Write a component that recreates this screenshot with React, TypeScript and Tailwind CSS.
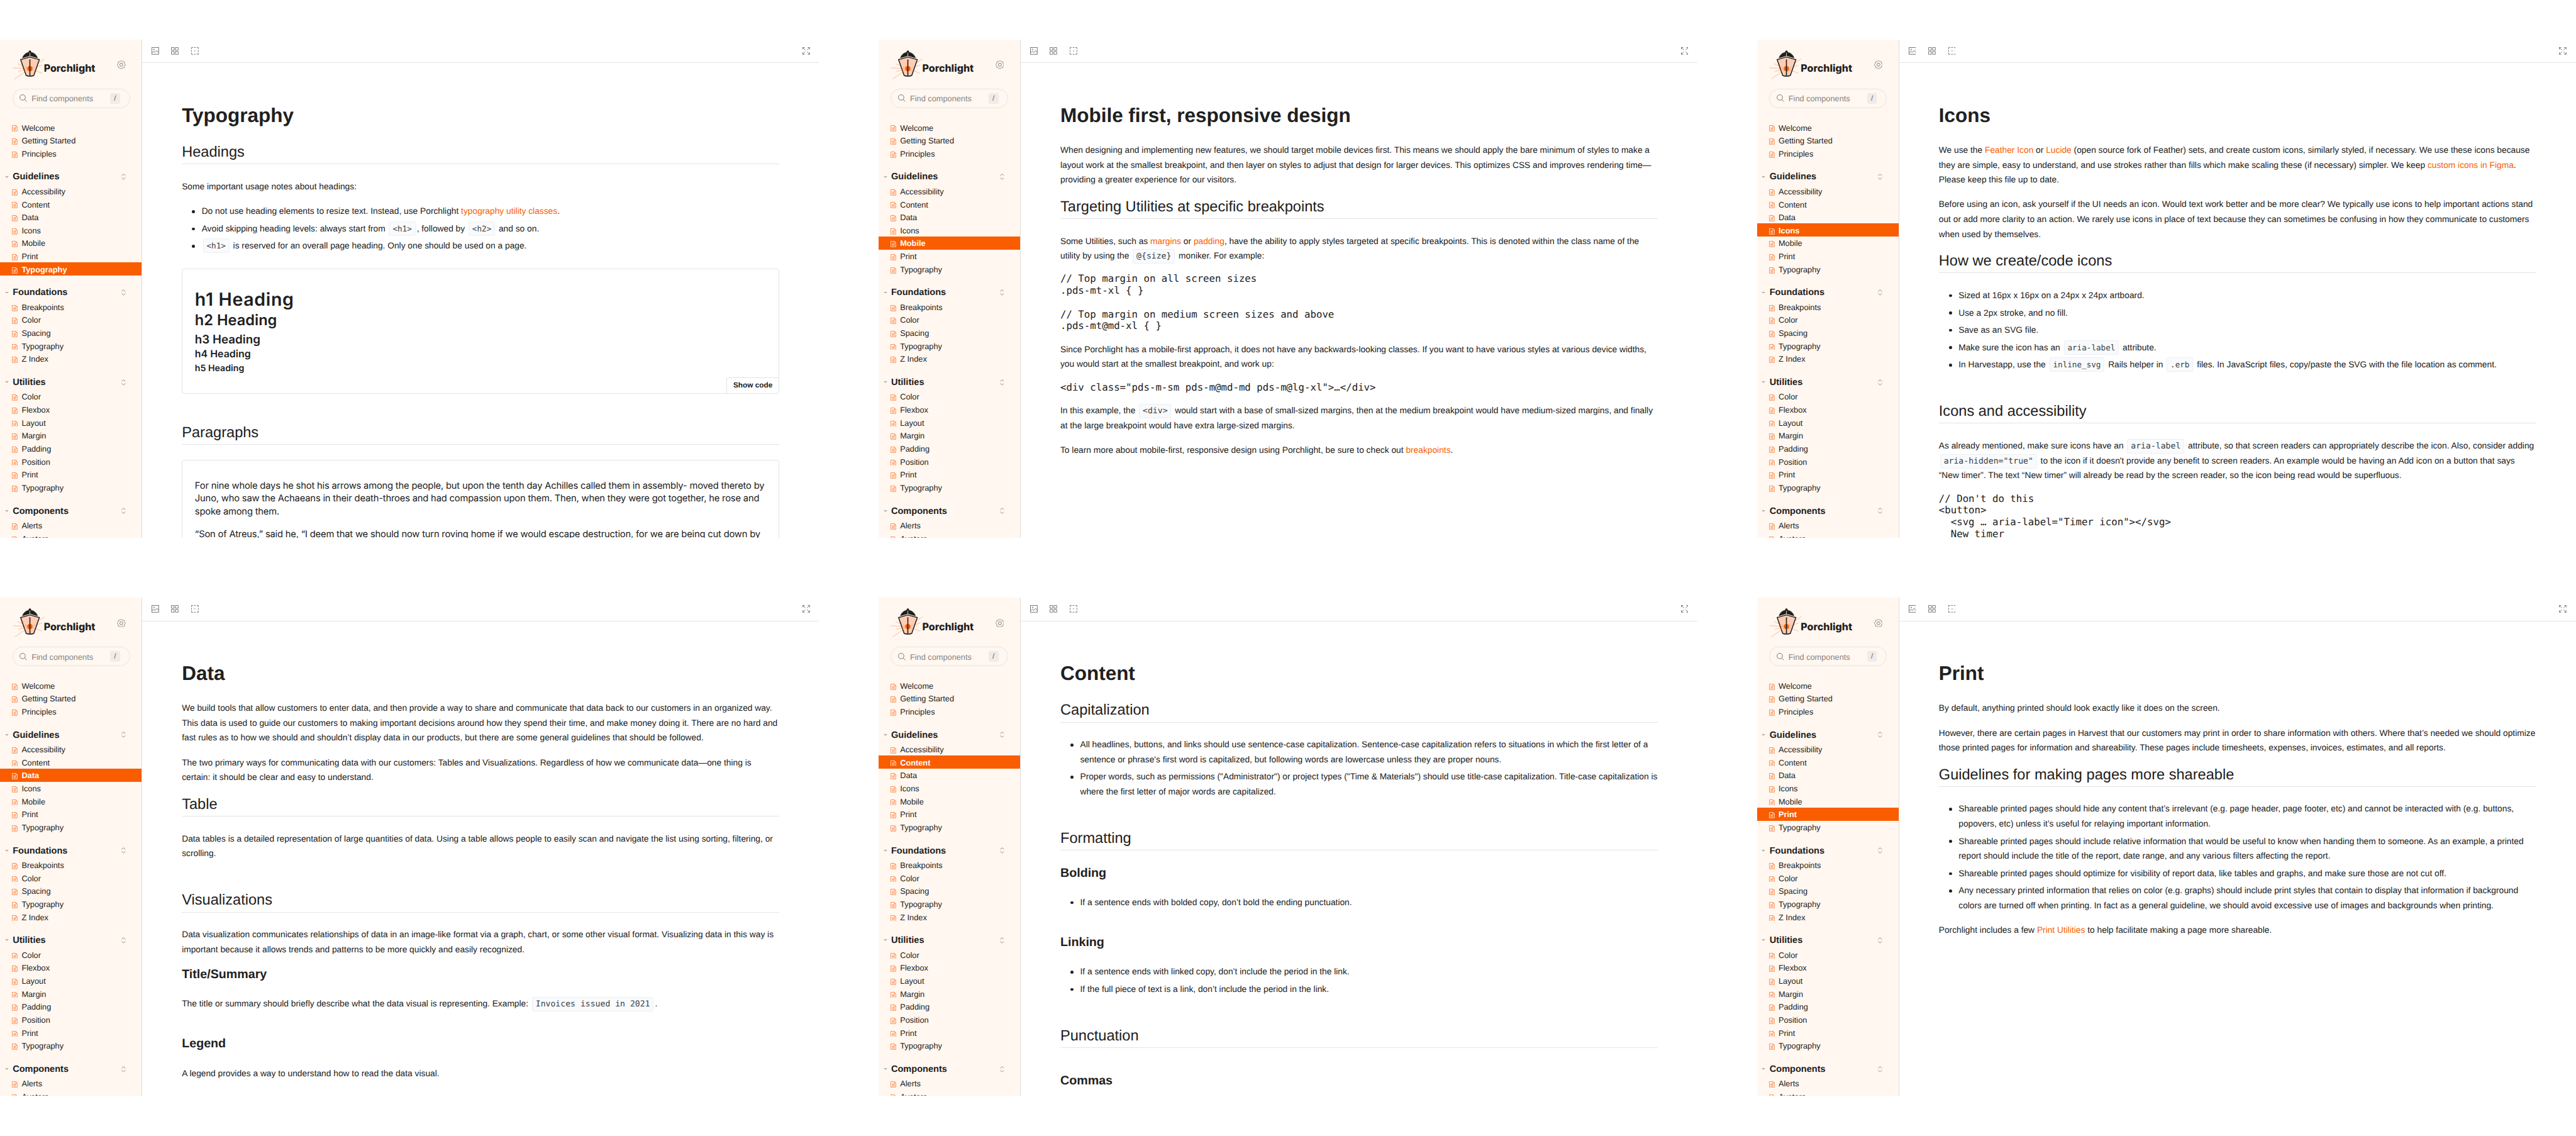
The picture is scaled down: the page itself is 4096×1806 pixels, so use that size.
import React from 'react';

const NAV: { title?: string; items: string[] }[] = [
  { items: ['Welcome', 'Getting Started', 'Principles'] },
  { title: 'Guidelines', items: ['Accessibility', 'Content', 'Data', 'Icons', 'Mobile', 'Print', 'Typography'] },
  { title: 'Foundations', items: ['Breakpoints', 'Color', 'Spacing', 'Typography', 'Z Index'] },
  { title: 'Utilities', items: ['Color', 'Flexbox', 'Layout', 'Margin', 'Padding', 'Position', 'Print', 'Typography'] },
  { title: 'Components', items: ['Alerts', 'Avatars'] },
];

const GEAR = Array.from({ length: 97 }, (_, i) => {
  const a = (i / 96) * Math.PI * 2;
  const r = 6 + 0.55 * Math.cos(8 * a);
  return `${i ? 'L' : 'M'}${(7 + r * Math.cos(a)).toFixed(2)} ${(7 + r * Math.sin(a)).toFixed(2)}`;
}).join('');

function Logo() {
  return (
    <svg viewBox="28 28 160 142" className="h-[47.3px] w-[53.3px] shrink-0" fill="none">
      <g stroke="#ffb18a" strokeWidth="2.6">
        <path d="M112 117L184 69M112 117L172 100M112 117L170 139M30 113L112 117M52 93L112 117M56 130L112 117M38 167L112 117" />
      </g>
      <path d="M67 73L112 60L158 73L131 150Q112 157 94 150Z" fill="#ffcdb4" stroke="#1f201d" strokeWidth="4.6" strokeLinejoin="round" />
      <path d="M88 108L112 117M86 128L112 117M85 115L112 117M137 110L112 117M135 125L112 117" stroke="#ffa473" strokeWidth="2.4" />
      <circle cx="112" cy="117" r="12.5" fill="#fa5d00" />
      <path d="M112 72V153" stroke="#1f201d" strokeWidth="5" />
      <circle cx="112" cy="35" r="6" fill="#1f201d" />
      <path d="M76 66C79 50 96 37 112 37C129 37 146 50 149 66L112 55Z" fill="#1f201d" stroke="#1f201d" strokeWidth="2" />
      <path d="M112 40V59M73 68L112 57L152 68" stroke="#fff7f0" strokeWidth="2.4" />
    </svg>
  );
}

function DocIcon({ active }: { active: boolean }) {
  return (
    <svg viewBox="0 0 9 10" className={`mt-[4px] h-[10px] w-[9px] shrink-0 ${active ? 'text-[#ffe3d2]' : 'text-[#ff8340]'}`} fill="none" stroke="currentColor" strokeWidth="0.9">
      <path d="M.5.5H6.4L8.5 2.6V9.5H.5Z" />
      <path d="M6.2.6V2.8H8.4" strokeWidth="0.8" />
      <path d="M2.3 4H6.7M2.3 5.7H6.7M2.3 7.4H6.7" strokeWidth="0.9" />
    </svg>
  );
}

function Sidebar({ active }: { active: string }) {
  return (
    <aside className="flex w-[230px] shrink-0 flex-col overflow-hidden border-r border-[#e0dddb] bg-[#fff7f0]">
      <div className="mt-[17px] flex h-12 shrink-0 items-center pr-[26px] pl-5">
        <Logo />
        <span className="mt-[12px] -ml-[2.5px] font-['Inter'] text-[16.3px] leading-5 font-extrabold text-[#1f201d]">Porchlight</span>
        <svg viewBox="0 0 14 14" className="ml-auto size-[14px]" fill="none" stroke="#7c7a77" strokeWidth="1">
          <path d={GEAR} />
          <circle cx="7" cy="7" r="2.5" />
        </svg>
      </div>
      <div className="mt-[14px] mr-[19px] ml-5 flex h-8 shrink-0 items-center rounded-full border border-[#e6e6e7] pr-[15px] pl-[11px]">
        <svg viewBox="0 0 12 12" className="size-[12px]" fill="none" stroke="#777672" strokeWidth="1">
          <circle cx="5" cy="5" r="4.4" />
          <path d="M8.3 8.3L11.6 11.6" />
        </svg>
        <span className="mt-px ml-[7px] text-[13px] text-[#84827f]">Find components</span>
        <span className="ml-auto flex h-[17px] w-4 items-center justify-center rounded-[3px] bg-[#f0ebe8] text-[12px] text-[#666]">/</span>
      </div>
      <nav className="mt-[20.3px] flex flex-col">
        {NAV.map((group, gi) => (
          <div key={gi}>
            {group.title && (
              <div className="flex h-10 items-center pt-[15px] pr-[26px] pl-[8px]">
                <svg viewBox="0 0 6 3" className="h-[3px] w-[6px]"><path d="M0 0H6L3 3Z" fill="#b9b4b0" /></svg>
                <span className="mt-[2.4px] ml-[6.5px] text-[14.8px] leading-6 font-bold">{group.title}</span>
                <svg viewBox="0 0 7 10" className="ml-auto h-[10px] w-[7px]" fill="none" stroke="#8f8c89" strokeWidth="1">
                  <path d="M.5 3.4L3.5.7L6.5 3.4M.5 6.6L3.5 9.3L6.5 6.6" />
                </svg>
              </div>
            )}
            {group.items.map((item) => {
              const on = (gi === 0 || gi === 1) && item === active;
              return (
                <div key={item} className={`flex h-[21px] items-center pl-[19.6px] ${on ? '-mr-px bg-[#fa5d00] font-bold text-white' : ''}`}>
                  <DocIcon active={on} />
                  <span className="mt-[2px] ml-[6.4px] text-[13px] leading-[22px]">{item}</span>
                </div>
              );
            })}
          </div>
        ))}
      </nav>
    </aside>
  );
}

function Toolbar() {
  return (
    <div className="flex h-[38px] shrink-0 items-center border-b border-[#e3e4e6] pr-[15px] pl-[15px]">
      <div className="flex flex-1 gap-5">
        <svg viewBox="0 0 12 12" className="size-3" fill="none" stroke="#75787b" strokeWidth="1">
          <rect x=".5" y=".5" width="11" height="11" />
          <circle cx="4" cy="3.7" r=".9" strokeWidth=".8" />
          <path d="M.8 9.2L3.6 6.4L5.6 8.8L8.6 5.2L11.4 8.6" />
        </svg>
        <svg viewBox="0 0 12 12" className="size-3" fill="none" stroke="#75787b" strokeWidth="1">
          <path d="M.5.5H5V5H.5ZM7 .5H11.5V5H7ZM.5 7H5V11.5H.5ZM7 7H11.5V11.5H7Z" />
        </svg>
        <svg viewBox="0 0 12 12" className="size-3" fill="none" stroke="#75787b" strokeWidth="1">
          <path d="M.5 3V.5H3M9 .5H11.5V3M11.5 9V11.5H9M3 11.5H.5V9M4.6 .5H7.4M4.6 11.5H7.4M.5 4.6V7.4M11.5 4.6V7.4" />
          <path d="M5.3 6H6.7" strokeWidth="1.4" />
        </svg>
      </div>
      <svg viewBox="0 0 12 12" className="size-3" fill="none" stroke="#75787b" strokeWidth="1">
        <path d="M.5 3.5V.5H3.5M.5 .5L4.6 4.6M8.5 .5H11.5V3.5M11.5 .5L7.4 4.6M11.5 8.5V11.5H8.5M11.5 11.5L7.4 7.4M3.5 11.5H.5V8.5M.5 11.5L4.6 7.4" />
      </svg>
    </div>
  );
}

function Panel({ active, title, children }: { active: string; title: string; children: React.ReactNode }) {
  return (
    <section className="flex h-[805px] w-[1324px] overflow-hidden bg-white">
      <Sidebar active={active} />
      <main className="flex min-w-0 flex-1 flex-col overflow-hidden">
        <Toolbar />
        <article className="flex w-[1094px] flex-col px-16 pt-[66.7px] whitespace-nowrap">
          <h1 className="text-[32px] leading-9 font-bold">{title}</h1>
          {children}
        </article>
      </main>
    </section>
  );
}

type Kids = { className?: string; children: React.ReactNode };

const H2 = ({ className = 'mt-[47px]', children }: Kids) => (
  <h2 className={`shrink-0 border-b border-[#e3e4e6] pt-[1.2px] pb-[1.8px] text-[24px] leading-8 ${className}`}>{children}</h2>
);
const H3 = ({ className = 'mt-[39px]', children }: Kids) => (
  <h3 className={`shrink-0 text-[20px] leading-7 font-bold ${className}`}>{children}</h3>
);
const P = ({ className = 'mt-4', children }: Kids) => (
  <p className={`shrink-0 text-[14px] leading-6 ${className}`}>{children}</p>
);
const List = ({ className = 'mt-6', items }: { className?: string; items: React.ReactNode[] }) => (
  <ul className={`flex shrink-0 flex-col gap-1 pl-8 text-[14px] leading-6 ${className}`}>
    {items.map((it, i) => (
      <li key={i} className="relative">
        <span className="absolute top-[10px] -left-[15.5px] size-[4.6px] rounded-full bg-[#202020]" />
        {it}
      </li>
    ))}
  </ul>
);
const Pre = ({ children }: { children: React.ReactNode }) => (
  <pre className="mt-4 shrink-0 font-['DejaVu_Sans_Mono',monospace] text-[16px] leading-[19px]">{children}</pre>
);
const Code = ({ small, children }: { small?: boolean; children: React.ReactNode }) => (
  <code className={`mx-[2px] rounded-[3px] border border-[#ecf0f4] bg-[#f8fafc] px-[5px] py-[3px] font-['DejaVu_Sans_Mono',monospace] leading-none text-[#3a3f43] ${small ? 'text-[12.85px]' : 'text-[13.35px]'}`}>{children}</code>
);
const A = ({ children }: { children: React.ReactNode }) => <a className="text-[#fa5d00]">{children}</a>;

function TypographyPage() {
  return (
    <Panel active="Typography" title="Typography">
      <H2 className="mt-[25px]">Headings</H2>
      <P className="mt-6">Some important usage notes about headings:</P>
      <List
        className="mt-4"
        items={[
          <>Do not use heading elements to resize text. Instead, use Porchlight <A>typography utility classes</A>.</>,
          <>Avoid skipping heading levels: always start from <Code small>&lt;h1&gt;</Code>, followed by <Code small>&lt;h2&gt;</Code> and so on.</>,
          <><Code small>&lt;h1&gt;</Code> is reserved for an overall page heading. Only one should be used on a page.</>,
        ]}
      />
      <div className="relative mt-[24.6px] flex h-[202px] shrink-0 flex-col rounded-[4px] border border-[#e0e3e6] pt-[28.4px] pl-5 font-['Inter'] font-semibold">
        <div className="text-[29px] leading-[40px] tracking-[0.7px]">h1 Heading</div>
        <div className="text-[24px] leading-[29px]">h2 Heading</div>
        <div className="text-[19.1px] leading-[32px]">h3 Heading</div>
        <div className="text-[16.2px] leading-[16px]">h4 Heading</div>
        <div className="text-[14.4px] leading-[30px]">h5 Heading</div>
        <div className="absolute right-0 bottom-0 flex h-[25px] w-[85px] items-center justify-center rounded-tl-[4px] border-t border-l border-[#e0e3e6] font-['Liberation_Sans'] text-[12px] font-bold">Show code</div>
      </div>
      <H2>Paragraphs</H2>
      <div className="mt-6 h-[400px] shrink-0 rounded-[4px] border border-[#e0e3e6] pt-[30px] pl-5 font-['Inter'] text-[15px] leading-[21px] tracking-[-0.195px]">
        <p>For nine whole days he shot his arrows among the people, but upon the tenth day Achilles called them in assembly- moved thereto by<br />Juno, who saw the Achaeans in their death-throes and had compassion upon them. Then, when they were got together, he rose and<br />spoke among them.</p>
        <p className="mt-4">“Son of Atreus,” said he, “I deem that we should now turn roving home if we would escape destruction, for we are being cut down by</p>
      </div>
    </Panel>
  );
}

function MobilePage() {
  return (
    <Panel active="Mobile" title="Mobile first, responsive design">
      <P className="mt-[26px]">When designing and implementing new features, we should target mobile devices first. This means we should apply the bare minimum of styles to make a<br />layout work at the smallest breakpoint, and then layer on styles to adjust that design for larger devices. This optimizes CSS and improves rendering time—<br />providing a greater experience for our visitors.</P>
      <H2 className="mt-[15px]">Targeting Utilities at specific breakpoints</H2>
      <P className="mt-6">Some Utilities, such as <A>margins</A> or <A>padding</A>, have the ability to apply styles targeted at specific breakpoints. This is denoted within the class name of the<br />utility by using the <Code>@{'{size}'}</Code> moniker. For example:</P>
      <Pre>{`// Top margin on all screen sizes
.pds-mt-xl { }

// Top margin on medium screen sizes and above
.pds-mt@md-xl { }`}</Pre>
      <P>Since Porchlight has a mobile-first approach, it does not have any backwards-looking classes. If you want to have various styles at various device widths,<br />you would start at the smallest breakpoint, and work up:</P>
      <Pre>{`<div class="pds-m-sm pds-m@md-md pds-m@lg-xl">…</div>`}</Pre>
      <P>In this example, the <Code>&lt;div&gt;</Code> would start with a base of small-sized margins, then at the medium breakpoint would have medium-sized margins, and finally<br />at the large breakpoint would have extra large-sized margins.</P>
      <P>To learn more about mobile-first, responsive design using Porchlight, be sure to check out <A>breakpoints</A>.</P>
    </Panel>
  );
}

function IconsPage() {
  return (
    <Panel active="Icons" title="Icons">
      <P className="mt-[26px]">We use the <A>Feather Icon</A> or <A>Lucide</A> (open source fork of Feather) sets, and create custom icons, similarly styled, if necessary. We use these icons because<br />they are simple, easy to understand, and use strokes rather than fills which make scaling these (if necessary) simpler. We keep <A>custom icons in Figma</A>.<br />Please keep this file up to date.</P>
      <P>Before using an icon, ask yourself if the UI needs an icon. Would text work better and be more clear? We typically use icons to help important actions stand<br />out or add more clarity to an action. We rarely use icons in place of text because they can sometimes be confusing in how they communicate to customers<br />when used by themselves.</P>
      <H2 className="mt-[15px]">How we create/code icons</H2>
      <List
        items={[
          'Sized at 16px x 16px on a 24px x 24px artboard.',
          'Use a 2px stroke, and no fill.',
          'Save as an SVG file.',
          <>Make sure the icon has an <Code small>aria-label</Code> attribute.</>,
          <>In Harvestapp, use the <Code small>inline_svg</Code> Rails helper in <Code small>.erb</Code> files. In JavaScript files, copy/paste the SVG with the file location as comment.</>,
        ]}
      />
      <H2>Icons and accessibility</H2>
      <P className="mt-6">As already mentioned, make sure icons have an <Code>aria-label</Code> attribute, so that screen readers can appropriately describe the icon. Also, consider adding<br /><Code>aria-hidden="true"</Code> to the icon if it doesn't provide any benefit to screen readers. An example would be having an Add icon on a button that says<br />“New timer”. The text “New timer” will already be read by the screen reader, so the icon being read would be superfluous.</P>
      <Pre>{`// Don't do this
<button>
  <svg … aria-label="Timer icon"></svg>
  New timer`}</Pre>
    </Panel>
  );
}

function DataPage() {
  return (
    <Panel active="Data" title="Data">
      <P className="mt-[26px]">We build tools that allow customers to enter data, and then provide a way to share and communicate that data back to our customers in an organized way.<br />This data is used to guide our customers to making important decisions around how they spend their time, and make money doing it. There are no hard and<br />fast rules as to how we should and shouldn’t display data in our products, but there are some general guidelines that should be followed.</P>
      <P>The two primary ways for communicating data with our customers: Tables and Visualizations. Regardless of how we communicate data—one thing is<br />certain: it should be clear and easy to understand.</P>
      <H2 className="mt-[15px]">Table</H2>
      <P className="mt-6">Data tables is a detailed representation of large quantities of data. Using a table allows people to easily scan and navigate the list using sorting, filtering, or<br />scrolling.</P>
      <H2>Visualizations</H2>
      <P className="mt-6">Data visualization communicates relationships of data in an image-like format via a graph, chart, or some other visual format. Visualizing data in this way is<br />important because it allows trends and patterns to be more quickly and easily recognized.</P>
      <H3 className="mt-[15px]">Title/Summary</H3>
      <P className="mt-[21px]">The title or summary should briefly describe what the data visual is representing. Example: <Code>Invoices issued in 2021</Code>.</P>
      <H3>Legend</H3>
      <P className="mt-[21px]">A legend provides a way to understand how to read the data visual.</P>
    </Panel>
  );
}

function ContentPage() {
  return (
    <Panel active="Content" title="Content">
      <H2 className="mt-[25px]">Capitalization</H2>
      <List
        items={[
          <>All headlines, buttons, and links should use sentence-case capitalization. Sentence-case capitalization refers to situations in which the first letter of a<br />sentence or phrase's first word is capitalized, but following words are lowercase unless they are proper nouns.</>,
          <>Proper words, such as permissions ("Administrator") or project types ("Time &amp; Materials") should use title-case capitalization. Title-case capitalization is<br />where the first letter of major words are capitalized.</>,
        ]}
      />
      <H2>Formatting</H2>
      <H3 className="mt-[23px]">Bolding</H3>
      <List className="mt-[21px]" items={['If a sentence ends with bolded copy, don’t bold the ending punctuation.']} />
      <H3>Linking</H3>
      <List className="mt-[21px]" items={['If a sentence ends with linked copy, don’t include the period in the link.', 'If the full piece of text is a link, don’t include the period in the link.']} />
      <H2>Punctuation</H2>
      <H3 className="mt-10">Commas</H3>
    </Panel>
  );
}

function PrintPage() {
  return (
    <Panel active="Print" title="Print">
      <P className="mt-[26px]">By default, anything printed should look exactly like it does on the screen.</P>
      <P>However, there are certain pages in Harvest that our customers may print in order to share information with others. Where that’s needed we should optimize<br />those printed pages for information and shareability. These pages include timesheets, expenses, invoices, estimates, and all reports.</P>
      <H2 className="mt-[15px]">Guidelines for making pages more shareable</H2>
      <List
        items={[
          <>Shareable printed pages should hide any content that’s irrelevant (e.g. page header, page footer, etc) and cannot be interacted with (e.g. buttons,<br />popovers, etc) unless it’s useful for relaying important information.</>,
          <>Shareable printed pages should include relative information that would be useful to know when handing them to someone. As an example, a printed<br />report should include the title of the report, date range, and any various filters affecting the report.</>,
          'Shareable printed pages should optimize for visibility of report data, like tables and graphs, and make sure those are not cut off.',
          <>Any necessary printed information that relies on color (e.g. graphs) should include print styles that contain to display that information if background<br />colors are turned off when printing. In fact as a general guideline, we should avoid excessive use of images and backgrounds when printing.</>,
        ]}
      />
      <P>Porchlight includes a few <A>Print Utilities</A> to help facilitate making a page more shareable.</P>
    </Panel>
  );
}

export default function App() {
  return (
    <div className="h-[1806px] w-[4096px] overflow-hidden bg-white">
      <div className="grid h-[1836px] w-[4164px] grid-cols-[1324px_1324px_1324px] content-start gap-x-24 gap-y-[97px] bg-white pt-16 font-['Liberation_Sans',Arial,sans-serif] text-[#202020] [text-rendering:geometricPrecision] [zoom:0.98367]">
        <TypographyPage />
        <MobilePage />
        <IconsPage />
        <DataPage />
        <ContentPage />
        <PrintPage />
      </div>
    </div>
  );
}
